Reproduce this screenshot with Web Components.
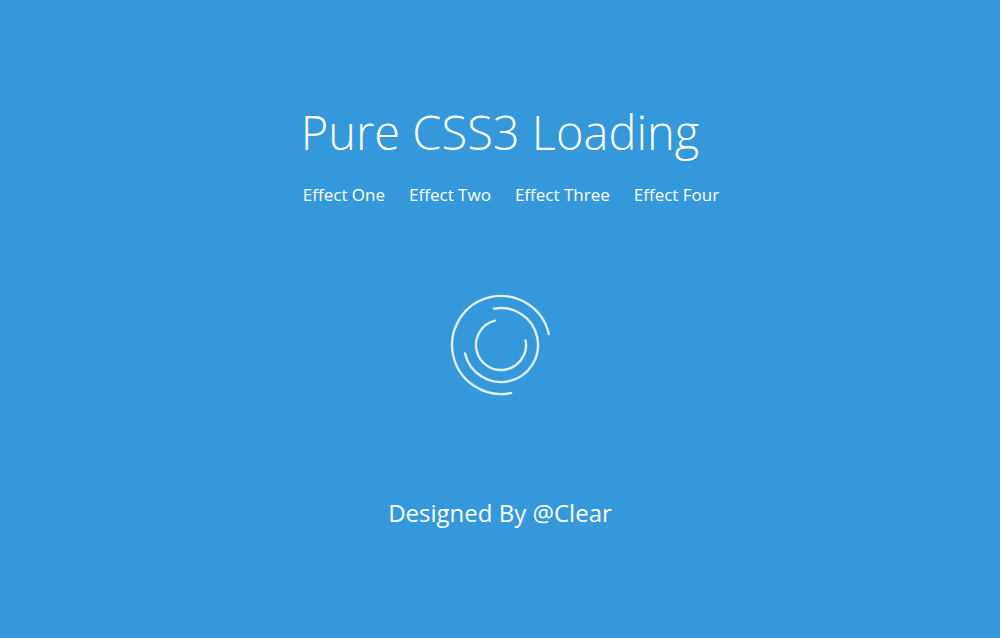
<!DOCTYPE html>
<html lang="en">
<head>
<meta charset="utf-8">
<meta name="viewport" content="width=device-width, initial-scale=1">
<title>Pure CSS3 Loading</title>
<style>
  body { margin: 0; background: #3498db; color: #fff; font-family: "Segoe UI", "Open Sans", "Noto Sans", sans-serif; }
</style>
</head>
<body>
<loading-page>
  <span slot="title">Pure CSS3 Loading</span>
  <effect-nav slot="nav">
    <effect-link href="#one">Effect One</effect-link>
    <effect-link href="#two">Effect Two</effect-link>
    <effect-link href="#three">Effect Three</effect-link>
    <effect-link href="#four">Effect Four</effect-link>
  </effect-nav>
  <ring-loader></ring-loader>
  <span slot="credit">Designed By @Clear</span>
</loading-page>
<script>
  function define(name, html, setup) {
    const template = document.createElement("template");
    template.innerHTML = html;
    customElements.define(name, class extends HTMLElement {
      constructor() {
        super();
        this.attachShadow({ mode: "open" }).append(template.content.cloneNode(true));
      }
      connectedCallback() { if (setup) setup(this); }
    });
  }

  define("loading-page", `
    <style>
      :host { display: flex; flex-direction: column; align-items: center; box-sizing: border-box; min-height: 100vh; padding-top: 100px; }
      header { display: flex; flex-direction: column; align-items: flex-start; width: min-content; }
      h1 { margin: 0; font-size: 47px; line-height: 64px; font-weight: 300; white-space: nowrap; }
      main { padding: 83px 0 100px; }
      footer { font-size: 24px; line-height: 32px; }
      ::slotted([slot="nav"]) { margin-top: 16px; padding-left: 2px; width: 0; }
    </style>
    <header>
      <h1><slot name="title"></slot></h1>
      <slot name="nav"></slot>
    </header>
    <main><slot></slot></main>
    <footer><slot name="credit"></slot></footer>`);

  define("effect-nav", `
    <style>
      :host { display: block; }
      nav { display: flex; gap: 24px; }
    </style>
    <nav aria-label="Effects"><slot></slot></nav>`);

  define("effect-link", `
    <style>
      :host { display: block; line-height: 30px; font-size: 17px; }
      a { color: inherit; text-decoration: none; white-space: nowrap; }
    </style>
    <a><slot></slot></a>`,
    el => { el.shadowRoot.querySelector("a").href = el.getAttribute("href"); });

  define("ring-loader", `
    <style>
      :host { display: block; width: 104px; height: 104px; }
      svg { display: block; width: 100%; height: 100%; }
    </style>
    <svg viewBox="-53 -52 104 104" fill="none" stroke="#fff" stroke-opacity=".85" stroke-width="2.4" stroke-linecap="round" role="img" aria-label="Loading">
      <path d="M47.800 -11A49 49 0 1 0 10 48"/>
      <path d="M-7 -36.300A37 37 0 1 1 -36 8.500"/>
      <path d="M-6 -24.300A25 25 0 1 0 24.600 -4.500"/>
    </svg>`);
</script>
</body>
</html>
